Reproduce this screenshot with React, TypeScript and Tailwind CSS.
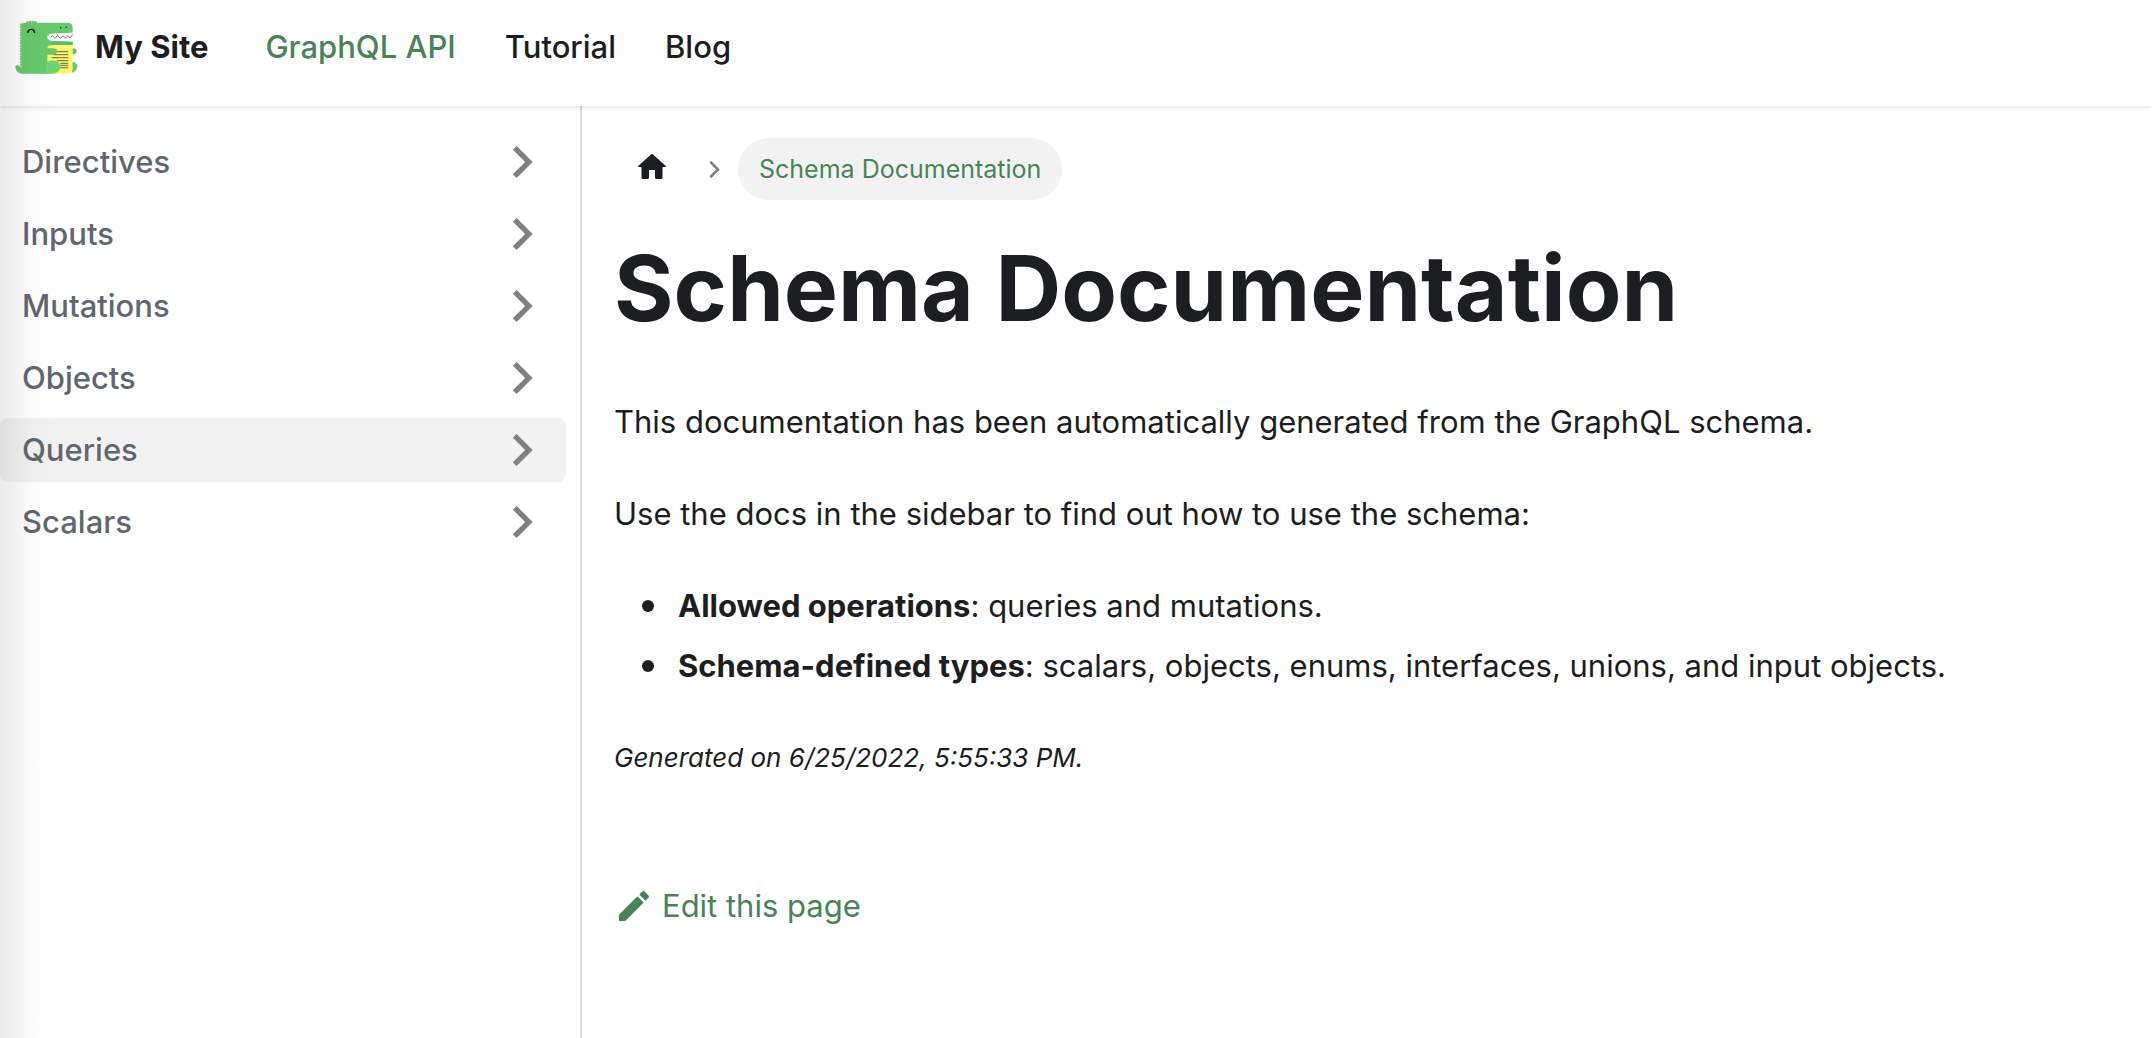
const navLinks = ['GraphQL API', 'Tutorial', 'Blog'];
const categories = ['Directives', 'Inputs', 'Mutations', 'Objects', 'Queries', 'Scalars'];
const schemaNotes = [
  { term: 'Allowed operations', text: 'queries and mutations.' },
  { term: 'Schema-defined types', text: 'scalars, objects, enums, interfaces, unions, and input objects.' },
];

function Logo() {
  return (
    <svg viewBox="44 56 189 162" className="h-[54px] w-[63px] shrink-0" aria-hidden="true">
      <g fill="#66c96c">
        <circle cx="81" cy="64" r="4" />
        <circle cx="89" cy="62" r="4" />
        <circle cx="97" cy="62" r="4" />
        <circle cx="105" cy="63" r="4" />
        {[70, 78, 86, 94, 102, 110, 118, 126, 134, 142, 150, 158, 166, 174, 182, 190].map((y) => (
          <circle key={y} cx="63" cy={y} r="4" />
        ))}
        <path d="M64 74Q64 64 74 64H201Q217 64 217 80V94L154 98Q143 100 143 108Q143 116 154 119L217 121V130H158V217H62Q46 215 45 195Q49 190 56 193Q58 196 64 197Z" />
        <circle cx="220" cy="150" r="9" />
        <path d="M214 182Q222 180 226 186Q234 192 230 198Q227 212 214 215Z" />
      </g>
      <path d="M150 97Q141 99 141 107Q141 116 150 117L218 121V94Z" fill="#fff" />
      <path d="M154 119L217 121V131H154Z" fill="#58bd70" />
      <path d="M151 108L156 103L164 111L172 103L180 111L188 103L196 111L203 103L209 110L217 99" fill="none" stroke="#333" strokeWidth="2" />
      <path d="M141 217V142Q141 132 151 132H217V201Q217 217 201 217Z" fill="#fdf86b" />
      <path d="M168 151H204M160 160H204M154 169H204M170 178H204M180 186H204M180 192H204M180 199H204" stroke="#4c4a32" strokeWidth="2.5" />
      <path d="M138 141H158Q170 141 171 150Q170 160 156 160H138Z" fill="#66c96c" />
      <path d="M138 184Q148 175 164 178Q174 179 176 185Q184 192 180 201Q173 217 155 217H138Z" fill="#6fd574" />
      <path d="M82 95Q84 84 93 84Q102 84 103 95" fill="none" stroke="#111" strokeWidth="4" />
      <circle cx="181" cy="79" r="2.3" fill="#123" />
      <circle cx="198" cy="78" r="2.3" fill="#123" />
    </svg>
  );
}

function CategoryArrow() {
  return (
    <svg viewBox="0 0 24 24" className="size-16 shrink-0 text-[#808080]" fill="currentColor" aria-hidden="true">
      <path d="M8.59 16.59L13.17 12 8.59 7.41 10 6l6 6-6 6z" />
    </svg>
  );
}

export default function App() {
  return (
    <div className="relative flex min-h-screen flex-col bg-white font-['Inter',sans-serif] text-[31px] leading-[52px] text-[#1c1e21]">
      <header className="relative z-10 flex h-[106px] items-center px-[15px] pb-3 shadow-[0_2px_4px_0_rgba(0,0,0,0.1)]">
        <a href="#" className="flex items-center gap-[17px] font-bold">
          <Logo />
          <span>My Site</span>
        </a>
        <nav className="ml-[57px] flex gap-[49px] font-medium">
          {navLinks.map((label, i) => (
            <a key={label} href="#" className={i === 0 ? 'text-[#488456]' : ''}>
              {label}
            </a>
          ))}
        </nav>
      </header>

      <div className="flex flex-1">
        <aside className="w-[582px] shrink-0 border-r-2 border-[#dadde1] pt-6 pr-[14px]">
          <ul className="flex flex-col gap-2">
            {categories.map((label) => (
              <li key={label}>
                <button
                  type="button"
                  className={
                    label === 'Queries'
                      ? 'flex h-16 w-full items-center justify-between rounded-lg bg-[#f2f2f2] pr-3 pl-[22px] font-medium text-[#606770]'
                      : 'flex h-16 w-full items-center justify-between rounded-lg pr-3 pl-[22px] font-medium text-[#606770]'
                  }
                >
                  <span>{label}</span>
                  <CategoryArrow />
                </button>
              </li>
            ))}
          </ul>
        </aside>

        <main className="min-w-0 flex-1 px-8 pt-8">
          <nav aria-label="Breadcrumbs">
            <ol className="flex items-center text-[25px]">
              <li className="px-5 pb-1">
                <a href="#" aria-label="Home page" className="block">
                  <svg viewBox="0 0 24 24" className="size-9" fill="currentColor" aria-hidden="true">
                    <path d="M10 19v-5h4v5c0 .55.45 1 1 1h3c.55 0 1-.45 1-1v-7h1.7c.46 0 .68-.57.33-.87L12.67 3.6c-.38-.34-.96-.34-1.34 0l-8.36 7.53c-.34.3-.13.87.33.87H5v7c0 .55.45 1 1 1h3c.55 0 1-.45 1-1z" />
                  </svg>
                </a>
              </li>
              <li className="flex items-center gap-4">
                <svg viewBox="0 0 14 20" className="ml-[18px] h-5 w-[14px] text-[#808080]" fill="none" stroke="currentColor" strokeWidth="2.6" strokeLinecap="round" aria-hidden="true">
                  <path d="M3 3.5L10 10.5L3 17.5" />
                </svg>
                <span className="flex h-[62px] items-center rounded-full bg-[#f2f2f2] px-[21px] text-[#488456]">Schema Documentation</span>
              </li>
            </ol>
          </nav>
          <h1 className="mt-7 text-[91px] leading-[120px] font-bold">Schema Documentation</h1>
          <p className="mt-12">This documentation has been automatically generated from the GraphQL schema.</p>
          <p className="mt-10">Use the docs in the sidebar to find out how to use the schema:</p>
          <ul className="mt-10 flex flex-col gap-2 pl-7">
            {schemaNotes.map(({ term, text }) => (
              <li key={term} className="flex items-center gap-6 before:size-3 before:shrink-0 before:rounded-full before:bg-[#1c1e21]">
                <span>
                  <strong>{term}</strong>: {text}
                </span>
              </li>
            ))}
          </ul>
          <p className="mt-10 text-[26px] italic">Generated on 6/25/2022, 5:55:33 PM.</p>
          <a href="#" className="mt-24 inline-flex items-center gap-2 text-[#488456]">
            <svg viewBox="0 0 40 40" className="size-10" fill="currentColor" aria-hidden="true">
              <path d="m34.5 11.7l-3 3.1-6.3-6.3 3.1-3q0.5-0.5 1.2-0.5t1.1 0.5l3.9 3.9q0.5 0.4 0.5 1.1t-0.5 1.2z m-29.5 17.1l18.4-18.5 6.3 6.3-18.4 18.4h-6.3v-6.2z" />
            </svg>
            Edit this page
          </a>
        </main>
      </div>

      <div className="pointer-events-none absolute inset-y-0 left-0 z-20 w-[60px] bg-linear-to-r from-black/8 via-black/2 to-transparent" />
    </div>
  );
}
